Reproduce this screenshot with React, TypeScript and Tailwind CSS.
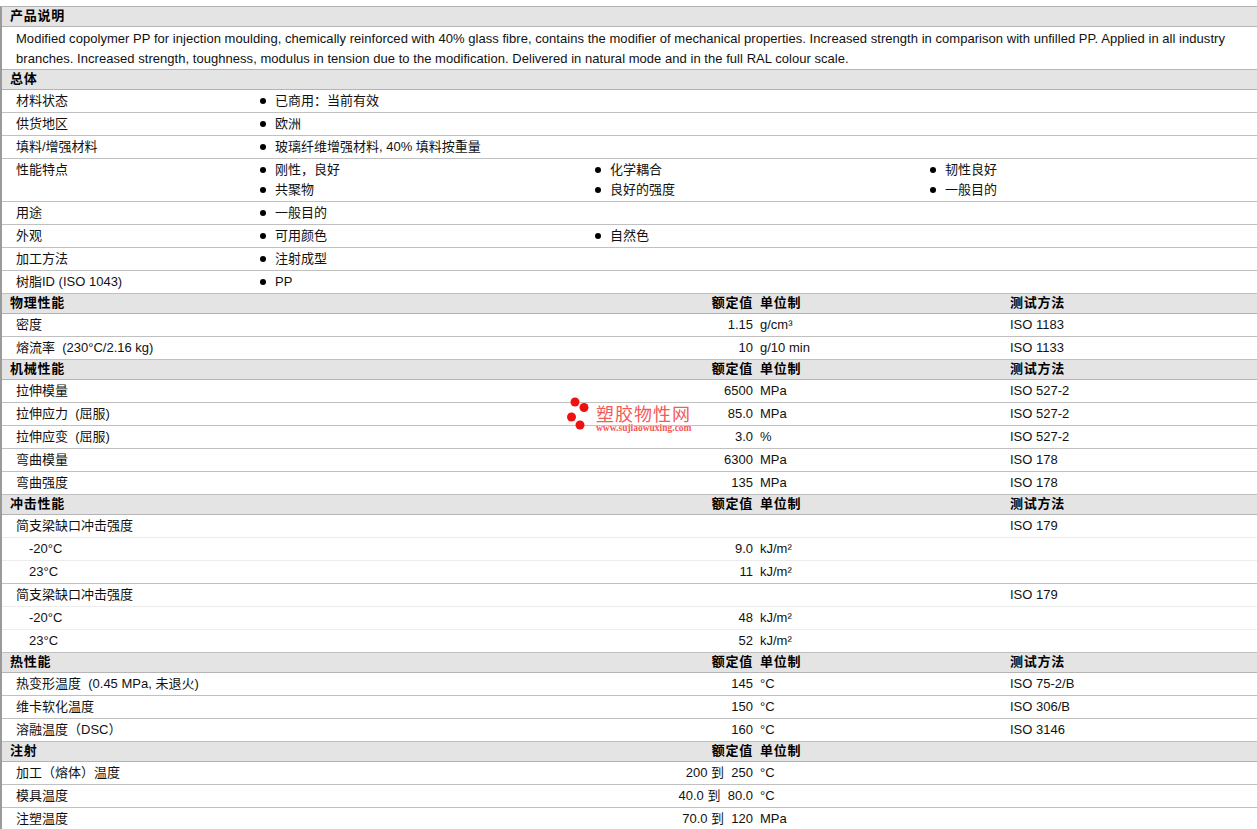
const bulletGroups = [
  { label: "材料状态", items: ["已商用：当前有效"] },
  { label: "供货地区", items: ["欧洲"] },
  { label: "填料/增强材料", items: ["玻璃纤维增强材料, 40% 填料按重量"] },
  { label: "性能特点", items: ["刚性，良好", "化学耦合", "韧性良好", "共聚物", "良好的强度", "一般目的"] },
  { label: "用途", items: ["一般目的"] },
  { label: "外观", items: ["可用颜色", "自然色"] },
  { label: "加工方法", items: ["注射成型"] },
  { label: "树脂ID (ISO 1043)", items: ["PP"] },
];

type Row = { name: string; value?: string; unit?: string; test?: string; sub?: boolean; soft?: boolean };

const sections: { title: string; test: boolean; rows: Row[] }[] = [
  {
    title: "物理性能",
    test: true,
    rows: [
      { name: "密度", value: "1.15", unit: "g/cm³", test: "ISO 1183" },
      { name: "熔流率  (230°C/2.16 kg)", value: "10", unit: "g/10 min", test: "ISO 1133" },
    ],
  },
  {
    title: "机械性能",
    test: true,
    rows: [
      { name: "拉伸模量", value: "6500", unit: "MPa", test: "ISO 527-2" },
      { name: "拉伸应力  (屈服)", value: "85.0", unit: "MPa", test: "ISO 527-2" },
      { name: "拉伸应变  (屈服)", value: "3.0", unit: "%", test: "ISO 527-2" },
      { name: "弯曲模量", value: "6300", unit: "MPa", test: "ISO 178" },
      { name: "弯曲强度", value: "135", unit: "MPa", test: "ISO 178" },
    ],
  },
  {
    title: "冲击性能",
    test: true,
    rows: [
      { name: "简支梁缺口冲击强度", test: "ISO 179", soft: true },
      { name: "-20°C", value: "9.0", unit: "kJ/m²", sub: true, soft: true },
      { name: "23°C", value: "11", unit: "kJ/m²", sub: true },
      { name: "简支梁缺口冲击强度", test: "ISO 179", soft: true },
      { name: "-20°C", value: "48", unit: "kJ/m²", sub: true, soft: true },
      { name: "23°C", value: "52", unit: "kJ/m²", sub: true },
    ],
  },
  {
    title: "热性能",
    test: true,
    rows: [
      { name: "热变形温度  (0.45 MPa, 未退火)", value: "145", unit: "°C", test: "ISO 75-2/B" },
      { name: "维卡软化温度", value: "150", unit: "°C", test: "ISO 306/B" },
      { name: "溶融温度（DSC）", value: "160", unit: "°C", test: "ISO 3146" },
    ],
  },
  {
    title: "注射",
    test: false,
    rows: [
      { name: "加工（熔体）温度", value: "200 到  250", unit: "°C" },
      { name: "模具温度", value: "40.0 到  80.0", unit: "°C" },
      { name: "注塑温度", value: "70.0 到  120", unit: "MPa" },
    ],
  },
];

function SectionHeader({ title, test, plain }: { title: string; test?: boolean; plain?: boolean }) {
  return (
    <div className="flex h-[20px] items-start border-b border-[#b4b4b4] bg-[#e4e4e4] pl-[8px] text-[13px] leading-[18px] font-bold tracking-[0.75px] text-black">
      <div className="flex-1">{title}</div>
      {!plain && (
        <>
          <div className="w-[150px] pr-[7px] text-right">额定值</div>
          <div className="w-[250px]">单位制</div>
          <div className="w-[247px]">{test ? "测试方法" : ""}</div>
        </>
      )}
    </div>
  );
}

function DataRow({ row }: { row: Row }) {
  return (
    <div className={`flex h-[23px] items-center border-b ${row.soft ? "border-[#ececec]" : "border-[#c0c0c0]"}`}>
      <div className={`flex-1 whitespace-pre ${row.sub ? "pl-[27px]" : "pl-[14px]"}`}>{row.name}</div>
      <div className="w-[150px] whitespace-pre pr-[7px] text-right">{row.value}</div>
      <div className="w-[250px]">{row.unit}</div>
      <div className="w-[247px]">{row.test}</div>
    </div>
  );
}

function BulletRow({ label, items }: { label: string; items: string[] }) {
  return (
    <div className="flex border-b border-[#c0c0c0] py-[1px]">
      <div className="w-[258px] shrink-0 pl-[14px] leading-[20px]">{label}</div>
      <div className="grid flex-1 grid-cols-[335px_335px_1fr]">
        {items.map((item) => (
          <div key={item} className="flex h-[20px] items-center leading-[20px]">
            <span className="mr-[9px] h-[6px] w-[6px] rounded-full bg-black" />
            <span>{item}</span>
          </div>
        ))}
      </div>
    </div>
  );
}

function Watermark() {
  return (
    <div className="absolute top-[397px] left-[566px] flex items-center">
      <svg width="28" height="36" viewBox="0 0 28 36">
        <circle cx="9" cy="5" r="4.5" fill="#f01010" />
        <circle cx="18" cy="10.5" r="4.5" fill="#f01010" />
        <circle cx="5.5" cy="20" r="4.5" fill="#f01010" />
        <circle cx="14" cy="28" r="4.5" fill="#f01010" />
      </svg>
      <div className="mt-[5px] ml-[2px] text-[#f35a5a]">
        <div className="h-[20px] font-['Noto_Sans_CJK_SC',sans-serif] text-[18px] leading-[20px] tracking-[1px]">塑胶物性网</div>
        <div className="mt-[1px] font-['Liberation_Serif',serif] text-[9.5px] leading-[9px] font-bold whitespace-nowrap">www.sujiaowuxing.com</div>
      </div>
    </div>
  );
}

export default function App() {
  return (
    <div className="relative h-[829px] w-[1257px] overflow-hidden bg-white font-['Liberation_Sans','Noto_Sans_CJK_SC',sans-serif] text-[13px] text-[#111]">
      <div className="mt-[6px] border-t border-l-2 border-[#b4b4b4] border-l-[#9a9a9a]">
        <SectionHeader title="产品说明" plain />
        <div className="h-[43px] border-b border-[#b4b4b4] px-[14px] pt-[2px] leading-[20px] tracking-[0.04px]">
          Modified copolymer PP for injection moulding, chemically reinforced with 40% glass fibre, contains the modifier of mechanical properties. Increased strength in comparison with unfilled PP. Applied in all industry branches. Increased strength, toughness, modulus in tension due to the modification. Delivered in natural mode and in the full RAL colour scale.
        </div>
        <SectionHeader title="总体" plain />
        {bulletGroups.map((g) => (
          <BulletRow key={g.label} label={g.label} items={g.items} />
        ))}
        {sections.map((s) => (
          <div key={s.title}>
            <SectionHeader title={s.title} test={s.test} />
            {s.rows.map((r, i) => (
              <DataRow key={i} row={r} />
            ))}
          </div>
        ))}
      </div>
      <Watermark />
    </div>
  );
}
